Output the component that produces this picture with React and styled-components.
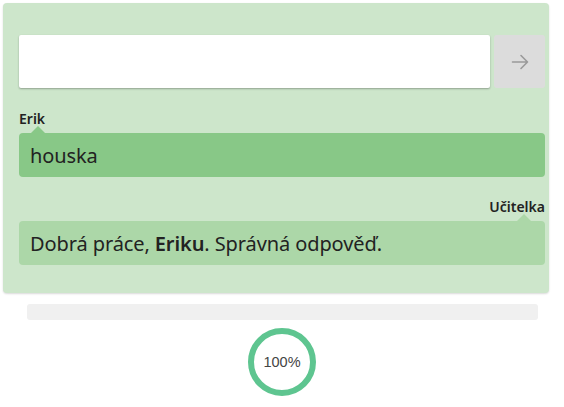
import React from 'react'
import styled, { createGlobalStyle } from 'styled-components'

const GlobalStyle = createGlobalStyle`
  body {
    margin: 0;
    background: #fff;
    font-family: "Noto Sans", "Open Sans", sans-serif;
    color: #222;
  }
`

const Page = styled.div`
  width: 564px;
  padding-top: 3px;
`

const Panel = styled.div`
  margin-left: 3px;
  width: 546px;
  box-sizing: border-box;
  background: #cde6cb;
  border-radius: 4px;
  box-shadow: 0 1px 2px rgba(0, 0, 0, 0.15);
  padding: 32px 4px 28px 16px;
`

const InputRow = styled.div`
  display: flex;
  gap: 4px;
  height: 53px;
`

const Field = styled.input`
  flex: 1;
  border: none;
  outline: none;
  background: #fff;
  border-radius: 2px;
  box-shadow: 0 1px 2px rgba(0, 0, 0, 0.3);
  font: inherit;
  font-size: 20px;
  padding: 0 12px;
`

const SendButton = styled.button`
  width: 51px;
  border: none;
  border-radius: 3px;
  background: #dcdcdc;
  display: flex;
  align-items: center;
  justify-content: center;
  padding: 0;
  color: #999;
`

const Message = styled.div`
  margin-top: ${p => p.$top}px;
  display: flex;
  flex-direction: column;
  align-items: ${p => (p.$right ? 'flex-end' : 'flex-start')};
`

const Author = styled.div`
  font-size: 14px;
  font-weight: 600;
  line-height: 19px;
  margin-bottom: 5px;
`

const Bubble = styled.div`
  position: relative;
  width: 526px;
  box-sizing: border-box;
  background: ${p => p.$bg};
  border-radius: 4px;
  padding: 0 11px;
  height: 44px;
  display: flex;
  align-items: center;
  font-size: 20px;
  letter-spacing: -0.1px;

  &::before {
    content: '';
    position: absolute;
    top: -7px;
    ${p => (p.$right ? 'right: 14px;' : 'left: 12px;')}
    border-left: 7px solid transparent;
    border-right: 7px solid transparent;
    border-bottom: 7px solid ${p => p.$bg};
  }

  b {
    font-weight: 600;
  }
`

const Progress = styled.div`
  margin: 11px 0 0 27px;
  width: 511px;
  height: 16px;
  border-radius: 3px;
  background: #f0f0f0;
`

const Ring = styled.div`
  margin: 8px 0 0 248px;
  width: 68px;
  height: 68px;
  box-sizing: border-box;
  border: 6px solid #5ec590;
  border-radius: 50%;
  display: flex;
  align-items: center;
  justify-content: center;
  font-family: "Liberation Sans", Arial, sans-serif;
  font-size: 14.5px;
  color: #444;
`

const App = () => (
  <Page>
    <GlobalStyle />
    <Panel>
      <InputRow>
        <Field />
        <SendButton>
          <svg width="20" height="20" viewBox="0 0 20 20" fill="none" stroke="currentColor" strokeWidth="1.6" strokeLinecap="round" strokeLinejoin="round">
            <path d="M2.5 10h15M11 3.5l6.5 6.5-6.5 6.5" />
          </svg>
        </SendButton>
      </InputRow>
      <Message $top={21}>
        <Author>Erik</Author>
        <Bubble $bg="#88c887">houska</Bubble>
      </Message>
      <Message $top={20} $right>
        <Author>Učitelka</Author>
        <Bubble $bg="#acd7a8" $right>
          <span>Dobrá práce, <b>Eriku</b>. Správná odpověď.</span>
        </Bubble>
      </Message>
    </Panel>
    <Progress />
    <Ring>100%</Ring>
  </Page>
)

export default App
